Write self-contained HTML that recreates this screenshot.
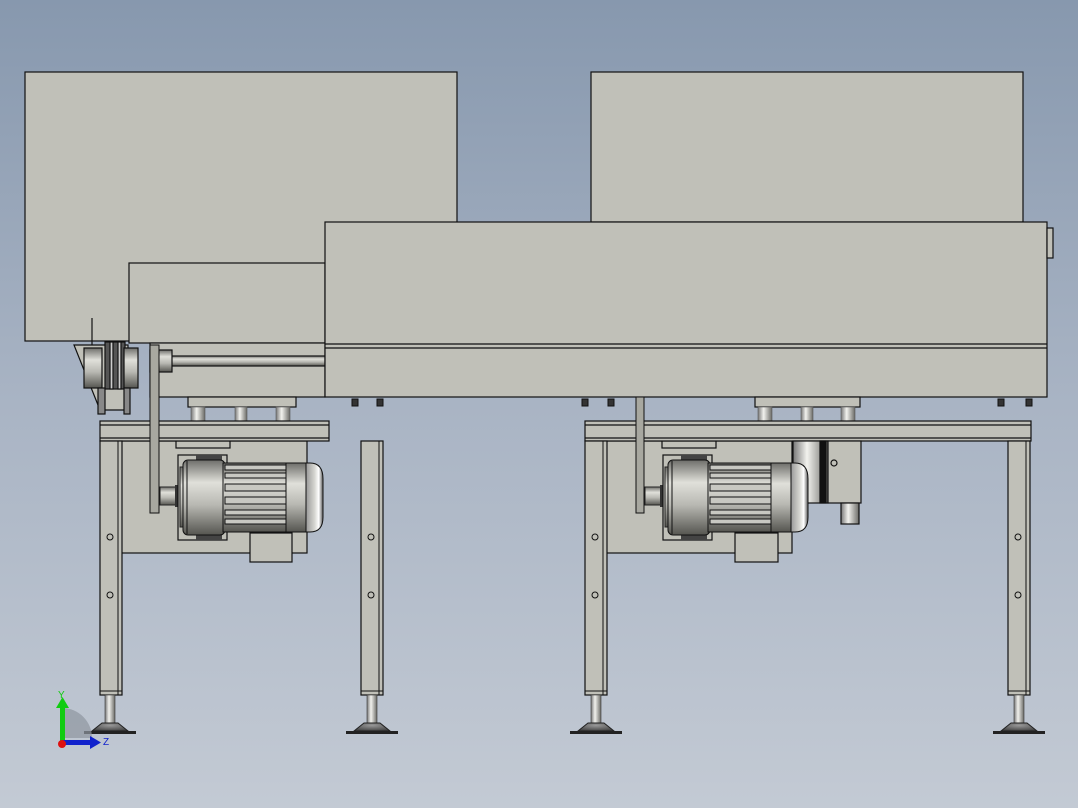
<!DOCTYPE html>
<html><head><style>
html,body{margin:0;padding:0;}
body{width:1078px;height:808px;overflow:hidden;background:linear-gradient(#8798ae 0%,#a9b4c4 50%,#c3cad4 100%);}
svg{display:block}
</style></head><body>
<svg width="1078" height="808" viewBox="0 0 1078 808" xmlns="http://www.w3.org/2000/svg">
<defs>
<linearGradient id="cyl" x1="0" y1="0" x2="0" y2="1">
<stop offset="0" stop-color="#6e6e6a"/><stop offset="0.3" stop-color="#e0e0da"/><stop offset="0.6" stop-color="#b8b8b2"/><stop offset="1" stop-color="#555550"/></linearGradient>
<linearGradient id="cylv" x1="0" y1="0" x2="1" y2="0">
<stop offset="0" stop-color="#777"/><stop offset="0.4" stop-color="#f2f2ee"/><stop offset="1" stop-color="#6a6a66"/></linearGradient>
<linearGradient id="cap" x1="0" y1="0" x2="1" y2="0">
<stop offset="0" stop-color="#999"/><stop offset="0.5" stop-color="#d5d5d0"/><stop offset="0.75" stop-color="#fff"/><stop offset="1" stop-color="#555"/></linearGradient>
<radialGradient id="footg" cx="0.5" cy="0.3" r="0.7"><stop offset="0" stop-color="#999"/><stop offset="1" stop-color="#444"/></radialGradient>
<g id="motor">
<rect x="-18" y="32" width="18" height="18" fill="url(#cyl)" stroke="#222"/>
<rect x="-3" y="30" width="4" height="22" fill="#333"/>
<rect x="0" y="0" width="49" height="85" fill="#c0c0b8" stroke="#111" stroke-width="1.2"/>
<rect x="18" y="0" width="26" height="6" fill="#444"/>
<rect x="18" y="79" width="26" height="6" fill="#444"/>
<rect x="2" y="12" width="5" height="60" fill="url(#cyl)" stroke="#222"/>
<rect x="5" y="5" width="42" height="75" rx="5" fill="url(#cyl)" stroke="#111"/>
<line x1="9" y1="6" x2="9" y2="79" stroke="#111"/>
<rect x="45" y="8" width="85" height="69" fill="url(#cyl)" stroke="#111"/>
<g fill="#c8c8c2" stroke="#111" stroke-width="1">
<rect x="47" y="10" width="61" height="5"/><rect x="47" y="18" width="61" height="5"/>
<rect x="47" y="29" width="61" height="7"/><rect x="47" y="42" width="61" height="7"/>
<rect x="47" y="55" width="61" height="5"/><rect x="47" y="64" width="61" height="5"/></g>
<line x1="108" y1="8" x2="108" y2="77" stroke="#111"/>
<path d="M128 8 H132 Q145 8 145 24 V62 Q145 77 132 77 H128 Z" fill="url(#cap)" stroke="#111"/>
</g>
<g id="foot">
<rect x="-5" y="0" width="10" height="28" fill="url(#cylv)" stroke="#333" stroke-width="0.6"/>
<path d="M-8 28 H8 L18 36 H-18 Z" fill="url(#footg)" stroke="#222"/>
<rect x="-26" y="36" width="52" height="3" fill="#222"/>
</g>
<g id="leg">
<rect x="0" y="0" width="22" height="254" fill="#c0c0b8" stroke="#111" stroke-width="1.2"/>
<line x1="18" y1="0" x2="18" y2="254" stroke="#111"/>
<line x1="0" y1="250" x2="22" y2="250" stroke="#111"/>
<circle cx="10" cy="96" r="3" fill="none" stroke="#111"/>
<circle cx="10" cy="154" r="3" fill="none" stroke="#111"/>
</g>
</defs>
<g stroke="#111" stroke-width="1.2" fill="#c0c0b8">
<rect x="25" y="72" width="432" height="269"/>
<rect x="591" y="72" width="432" height="150"/>
<rect x="129" y="263" width="196" height="80"/>
<rect x="150" y="343" width="175" height="54"/>
<rect x="168" y="356" width="157" height="10" fill="url(#cyl)"/>
<rect x="150" y="350" width="22" height="22" fill="url(#cyl)"/>
<path d="M74 345 H128 V410 H100 Z" fill="#c0c0b8"/>
<rect x="84" y="348" width="18" height="40" fill="url(#cyl)"/>
<rect x="105" y="342" width="20" height="47" fill="#555"/>
<rect x="110" y="342" width="3" height="47" fill="#ccc"/>
<rect x="118" y="342" width="3" height="47" fill="#ccc"/>
<rect x="124" y="348" width="14" height="40" fill="url(#cyl)"/>
<rect x="98" y="388" width="7" height="26" fill="#888"/>
<rect x="124" y="388" width="6" height="26" fill="#888"/>
<line x1="92" y1="318" x2="92" y2="345"/>
<rect x="325" y="222" width="722" height="175"/>
<line x1="325" y1="344" x2="1047" y2="344"/>
<line x1="325" y1="348" x2="1047" y2="348"/>
<rect x="1047" y="228" width="6" height="30"/>
<rect x="188" y="397" width="108" height="10"/>
<rect x="755" y="397" width="105" height="10"/>
</g>
<g fill="url(#cylv)" stroke="#555" stroke-width="0.6">
<rect x="191" y="407" width="14" height="14"/><rect x="235" y="407" width="12" height="14"/><rect x="276" y="407" width="14" height="14"/>
<rect x="758" y="407" width="14" height="14"/><rect x="801" y="407" width="12" height="14"/><rect x="841" y="407" width="14" height="14"/>
</g>
<g fill="#333" stroke="#111">
<rect x="352" y="399" width="6" height="7"/><rect x="377" y="399" width="6" height="7"/>
<rect x="582" y="399" width="6" height="7"/><rect x="608" y="399" width="6" height="7"/>
<rect x="998" y="399" width="6" height="7"/><rect x="1026" y="399" width="6" height="7"/>
</g>
<g stroke="#111" stroke-width="1.2" fill="#c0c0b8">
<rect x="121" y="441" width="186" height="112"/>
<rect x="606" y="441" width="186" height="112"/>
<rect x="176" y="441" width="54" height="7"/>
<rect x="662" y="441" width="54" height="7"/>
<rect x="250" y="533" width="42" height="29"/>
<rect x="735" y="533" width="43" height="29"/>
<rect x="100" y="421" width="229" height="20"/>
<line x1="100" y1="425" x2="329" y2="425"/><line x1="100" y1="438" x2="329" y2="438"/>
<rect x="585" y="421" width="446" height="20"/>
<line x1="585" y1="425" x2="1031" y2="425"/><line x1="585" y1="438" x2="1031" y2="438"/>
<rect x="793" y="441" width="35" height="62" fill="url(#cylv)"/>
<rect x="820" y="441" width="6" height="62" fill="#111"/>
<rect x="828" y="441" width="33" height="62"/>
<rect x="841" y="503" width="18" height="21" fill="url(#cylv)"/>
<circle cx="834" cy="463" r="3" fill="none"/>
</g>
<use href="#motor" x="178" y="455"/>
<use href="#motor" x="663" y="455"/>
<g stroke="#111" fill="#a8a8a0">
<rect x="150" y="345" width="9" height="168"/>
<rect x="636" y="397" width="8" height="116"/>
</g>
<use href="#leg" x="100" y="441"/>
<use href="#leg" x="361" y="441"/>
<use href="#leg" x="585" y="441"/>
<use href="#leg" x="1008" y="441"/>
<use href="#foot" x="110" y="695"/>
<use href="#foot" x="372" y="695"/>
<use href="#foot" x="596" y="695"/>
<use href="#foot" x="1019" y="695"/>
<path d="M62 708 A30 30 0 0 1 92 738 H62 Z" fill="#8e96a0" opacity="0.7"/>
<rect x="60" y="706" width="5" height="36" fill="#1c1"/>
<path d="M56 708 L62.5 697 L69 708 Z" fill="#1c1"/>
<rect x="62" y="740" width="30" height="5" fill="#12c"/>
<path d="M90 736 L101 742.5 L90 749 Z" fill="#12c"/>
<circle cx="62" cy="744" r="4" fill="#d11"/>
<text x="58" y="698" font-family="Liberation Sans,sans-serif" font-size="10" fill="#1c1">Y</text>
<text x="103" y="745" font-family="Liberation Sans,sans-serif" font-size="10" fill="#12c">Z</text>
</svg>
</body></html>
